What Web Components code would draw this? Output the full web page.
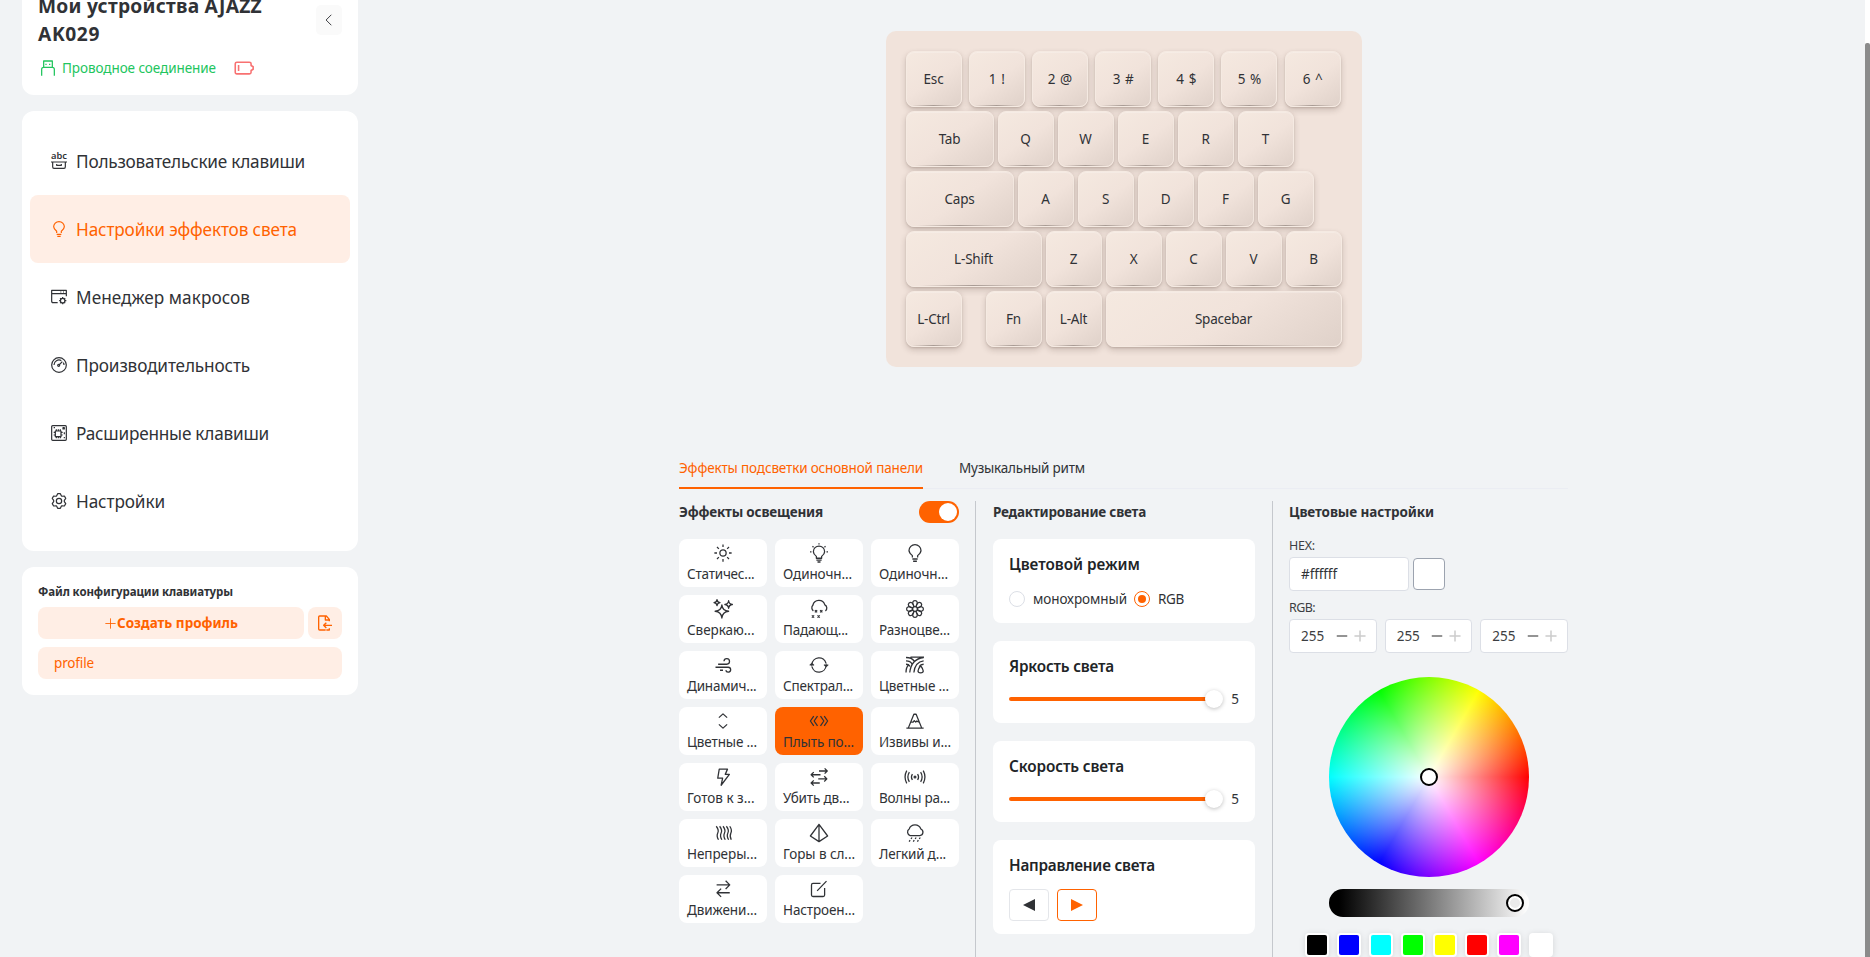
<!DOCTYPE html>
<html lang="ru">
<head>
<meta charset="utf-8">
<title>AJAZZ AK029</title>
<style>
    html, body {
        margin: 0;
        height: 100%;
        overflow: hidden;
    }

    body {
        background: #f1f3f5;
        color: #303236;
        font-family: "Noto Sans", "Open Sans", sans-serif;
        font-size: 13.5px;
    }
</style>
</head>
<body>
<keyboard-app></keyboard-app>

<script>
const ICONS = {
    back: '<path d="M16 3L7 12l9 9"/>',
    usb: '<path d="M5.500 11V1.500h13V11M2.500 23.500V14q0-3 3-3h13q3 0 3 3v9.500M9 5.500v2M14.500 5.500v2"/>',
    battery: '<path d="M3.500 5h15q2 0 2 2v2l2.500 1.500v3L20.500 15v2q0 2-2 2h-15q-2 0-2-2V7q0-2 2-2zM5.500 8.500v7"/>',
    keys: '<text x="0" y="9.500" font-size="12.500" font-weight="600" textLength="24" lengthAdjust="spacingAndGlyphs" fill="currentColor" stroke="none">abc</text><path d="M0 13.500h24M2.500 13.500v7q0 2.500 2 2.500h15q2 0 2-2.500v-7M8.500 16.500v2h7v-2"/>',
    bulb: '<path d="M8.500 18v-2.500C5.500 13 4 11.500 4 8.800a8 8 0 0 1 16 0c0 2.700-1.500 4.200-4.500 6.700V18M8.500 20h7M9.500 23h5"/>',
    macro: '<path d="M10 20.500H3Q1 20.500 1 18.500V2h22v9M1 7h22M14 4.500h1.500M18 4.500h1.500"/><circle cx="17.500" cy="17.500" r="3.300"/><path d="M17.500 12v2M17.500 21v2M12.200 17.500h2M21 17.500h2M13.700 13.700l1.400 1.400M20 20l1.300 1.300M13.700 21.300l1.400-1.400M20 15l1.300-1.300"/>',
    gauge: '<circle cx="12" cy="12" r="11"/><path d="M4.500 12a7.500 7.500 0 0 1 11-6.600M17 7l-5 5M18.500 8.500q1 1.500 1 3.500"/><circle cx="11.500" cy="12.500" r="1.500"/>',
    chip: '<rect x="1" y="1" width="22" height="22" rx="1.500"/><rect x="6.500" y="9" width="8.500" height="8.500"/><path d="M8 6.500V9M11 6.500V9M14 6.500V9M8 17.500V20M11 17.500V20M14 17.500V20M4 11h2.500M4 15h2.500M15 11h2.500M15 15h2.500M4 4h2M18 4h2v2h-2zM20 11v3M20 18v2"/>',
    gear: '<path d="M8.500 4.300L10 1h4l1.500 3.300 1 .6 3.600-.4 2 3.500-2.100 3v2l2.100 3-2 3.500-3.600-.4-1 .6L14 23h-4l-1.500-3.300-1-.6-3.600.4-2-3.500L4 13v-2L1.900 8l2-3.500 3.600.4z"/><circle cx="12" cy="12" r="4"/>',
    plus: '<path d="M12 2.500v19M2.500 12h19"/>',
    minus: '<path d="M3 12h18"/>',
    import: '<path d="M13 22.500H4q-1.500 0-1.500-1.500V3Q2.500 1.500 4 1.500h10l4.500 5v3M12.500 1.500v6h6M22.500 15.500H11M14 11.500l-4 4 4 4M14 22.500h4.500V20"/>',
    sun: '<circle cx="12" cy="12" r="4.200"/><path d="M12 .5V4M12 20v3.500M.5 12H4M20 12h3.500M4 4l2.500 2.500M17.500 17.500L20 20M4 20l2.500-2.500M17.500 6.500L20 4"/>',
    bulbRays: '<path d="M8.500 19v-2.500c-2.500-2-4-3.500-4-6.300a7.500 7.500 0 0 1 15 0c0 2.800-1.500 4.300-4 6.300V19zM8.500 21.500h7M10 24h4M12-1v1.500M0 10.500h2M22 10.500h2M3.300 3l1.400 1.300M20.700 3l-1.400 1.300"/>',
    sparkle: '<path d="M10.500 6.500q.8 8 9 8.500-8.200.8-9 9-.8-8.200-9-9 8.200-.5 9-8.500zM4-.5Q4.500 3 8 3.500 4.500 4 4 7.500 3.500 4 0 3.500 3.500 3 4-.5zM19.500 1q.5 4.500 5 5-4.500.5-5 5-.5-4.500-5-5 4.500-.5 5-5z"/>',
    snow: '<path d="M4.500 14.500A5 5 0 0 1 3.800 7a8.300 8.300 0 0 1 16-.5 4.700 4.700 0 0 1 .7 8M6.500 13.500l3 3M9.500 13.500l-3 3M13.500 13.500l3 3M16.500 13.500l-3 3M2.500 20.500l3 3M5.500 20.500l-3 3M10 20.500l3 3M13 20.500l-3 3"/>',
    flower: '<circle cx="12" cy="12" r="3.200"/><g id="p"><path d="M10.800 9C7.500 4 9 .8 12 .8S16.500 4 13.200 9"/><path d="M10.800 9C7.500 4 9 .8 12 .8S16.500 4 13.200 9" transform="rotate(45 12 12)"/><path d="M10.800 9C7.500 4 9 .8 12 .8S16.500 4 13.200 9" transform="rotate(90 12 12)"/><path d="M10.800 9C7.500 4 9 .8 12 .8S16.500 4 13.200 9" transform="rotate(135 12 12)"/><path d="M10.800 9C7.500 4 9 .8 12 .8S16.500 4 13.200 9" transform="rotate(180 12 12)"/><path d="M10.800 9C7.500 4 9 .8 12 .8S16.500 4 13.200 9" transform="rotate(225 12 12)"/><path d="M10.800 9C7.500 4 9 .8 12 .8S16.500 4 13.200 9" transform="rotate(270 12 12)"/><path d="M10.800 9C7.500 4 9 .8 12 .8S16.500 4 13.200 9" transform="rotate(315 12 12)"/></g>',
    wind: '<path d="M5.500 11H17a3.700 3.700 0 1 0-3.700-4M2 15h17a3.300 3.300 0 1 1-3.300 4M8 19h4"/>',
    cycle: '<path d="M2.500 11a9.600 9.600 0 0 1 18.800-1.500M21.500 13a9.600 9.600 0 0 1-18.800 1.500M2.500 14v-3M21.500 10v3M-.3 12.500l2.800-2.500 2.800 2.500M18.700 11.500l2.800 2.500 2.800-2.500"/>',
    field: '<path d="M0 2q8 0 11 5M6 1.500h18M0 6.500q6 0 8 4M0 11q4 0 5 3M23.500 2Q7 4 5 22M23.500 6.500Q12 8 10.500 22M23.500 11q-4 0-6 3M0 22q0-7 4-11M19.500 13q7 9 0 9.500-7-.5 0-9.500z"/>',
    updown: '<path d="M6.500 7.500L12 2.500l5.500 5M6.500 16.500l5.500 5 5.500-5"/>',
    leftright: '<path d="M5 5.500L.5 12 5 18.500M10 5.500L5.500 12l4.500 6.500M14 5.500l4.500 6.500-4.500 6.500M19 5.500l4.500 6.500-4.500 6.500"/>',
    peak: '<path d="M.5 21.500h23M3 21.500L10.500 3h3L21 21.500M7 13.500h2.500l1.500-2 2 2 1.500-1.500 2.500 1.500"/>',
    bolt: '<path d="M7 1.500h11L15 8.500h5.500L9.500 23l2-9.500H5z"/>',
    arrows: '<path d="M12 4h11M19.500 .5L23 4l-3.500 3.500M14 9H1.500M5 5.500L1.500 9 5 12.500M11 14.500h11.500M19 11l3.500 3.500L19 18M13 20H1.500M5 16.500L1.500 20 5 23.500"/>',
    radio: '<circle cx="12" cy="12" r="1.200"/><path d="M8.500 8q-2.500 4 0 8M15.500 8q2.500 4 0 8M4.500 5.500q-4 6.500 0 13M19.500 5.500q4 6.500 0 13M1 3.500q-4.500 8.500 0 17M23 3.500q4.500 8.500 0 17"/>',
    waves: '<path d="M3 3q4 5 2 9t1 9M7.500 3q4 5 2 9t1 9M12 3q4 5 2 9t1 9M16.500 3q4 5 2 9t1 9M21 3q3.500 5 1.500 9t.5 9"/>',
    pyramid: '<path d="M12 .5L.5 16l11.500 7.500L23.500 16zM12 .5v23"/>',
    rain: '<path d="M5.500 15.500a5 5 0 0 1-1.300-8.800 8.300 8.300 0 0 1 15.600 0 4.600 4.600 0 0 1-1.300 8.800zM8 18l-1.300 2M13.500 18l-1.300 2M19 18l-1.300 2M5.500 21.500l-1.300 2M11 21.500l-1.300 2M16.500 21.500l-1.300 2"/>',
    swap: '<path d="M3.500 6.500h17M15.500 1l5.500 5.500-5.500 5.500M21 17H4M9.500 11.500L4 17l5.500 5.500"/>',
    edit: '<path d="M14 4.500H4Q2 4.500 2 6.500v13.500q0 2 2 2h13.500q2 0 2-2V10.500M9.500 14.500L22 1.500"/>'
};

// Stroke icon: <ui-icon name="gear" size="16" stroke="1.5">
class UiIcon extends HTMLElement {

    constructor() {
        super();
        this.shadow = this.attachShadow({mode: 'open'});
    }

    connectedCallback() {
        const size = this.getAttribute('size') || 18;
        const stroke = this.getAttribute('stroke') || 1.6;
        this.shadow.innerHTML = `<style>
                :host { display: inline-block; flex: none; width: ${size}px; height: ${size}px; }
                svg { display: block; overflow: visible; }
            </style>
            <svg width="${size}" height="${size}" viewBox="0 0 24 24" fill="none" stroke="currentColor"
                stroke-width="${stroke}" stroke-linejoin="round">${ICONS[this.getAttribute('name')]}</svg>`;
    }

}
customElements.define('ui-icon', UiIcon);

// Single line label, tracked so that it takes up exactly `width` pixels
class FitLabel extends HTMLElement {

    constructor() {
        super();
        this.shadow = this.attachShadow({mode: 'open'});
        this.shadow.innerHTML = `<style>
                :host { display: inline-block; white-space: nowrap; }
            </style><slot></slot>`;
    }

    connectedCallback() {
        const target = Number(this.getAttribute('width'));
        const natural = this.getBoundingClientRect().width;
        if (!target || !natural) {
            return;
        }
        this.style.letterSpacing = `${(target - natural) / this.textContent.length}px`;
    }

}
customElements.define('fit-label', FitLabel);

class UiCard extends HTMLElement {

    constructor() {
        super();
        this.shadow = this.attachShadow({mode: 'open'});
        this.shadow.innerHTML = `<style>
                :host { display: block; box-sizing: border-box; background: #fff; border-radius: 12px; }
            </style><slot></slot>`;
    }

}
customElements.define('ui-card', UiCard);

class NavItem extends HTMLElement {

    constructor() {
        super();
        this.shadow = this.attachShadow({mode: 'open'});
    }

    connectedCallback() {
        this.shadow.innerHTML = this.style_() + `
            <ui-icon name="${this.getAttribute('icon')}" size="16" stroke="1.800"></ui-icon>
            <fit-label width="${this.getAttribute('fit')}">${this.getAttribute('label')}</fit-label>`;
    }

    style_() {
        return `<style>
            :host {
                display: flex;
                align-items: center;
                gap: 9px;
                height: 68px;
                padding-left: 21px;
                border-radius: 8px;
                font-size: 17.200px;
            }

            :host([active]) {
                background: #ffeee5;
                color: #ff6200;
            }
        </style>`;
    }

}
customElements.define('nav-item', NavItem);

class DeviceCard extends HTMLElement {

    constructor() {
        super();
        this.shadow = this.attachShadow({mode: 'open'});
        this.shadow.innerHTML = this.style_() + this.html();
    }

    style_() {
        return `<style>
            :host { display: block; }

            ui-card {
                height: 128px;
                padding: 25px 16px 0;
            }

            .top {
                display: flex;
                justify-content: space-between;
                align-items: center;
                height: 56px;
            }

            h1 {
                margin: 0;
                font-size: 19.200px;
                line-height: 28px;
                font-weight: 700;
            }

            .back {
                display: grid;
                place-items: center;
                width: 26px;
                height: 30px;
                border-radius: 5px;
                background: #fafafa;
            }

            .status {
                display: flex;
                align-items: center;
                margin-top: 10px;
                padding-left: 2px;
                height: 20px;
                color: #22c55e;
            }

            .status fit-label { margin-left: 6px; }

            .battery {
                margin-left: 18px;
                color: #f87171;
            }
        </style>`;
    }

    html() {
        return `<ui-card>
            <div class="top">
                <h1><fit-label width="224">Мои устройства AJAZZ</fit-label><br><fit-label width="62">AK029</fit-label></h1>
                <div class="back"><ui-icon name="back" size="14"></ui-icon></div>
            </div>
            <div class="status">
                <ui-icon name="usb" size="16" stroke="1.900"></ui-icon>
                <fit-label width="154">Проводное соединение</fit-label>
                <ui-icon class="battery" name="battery" size="20" stroke="1.900"></ui-icon>
            </div>
        </ui-card>`;
    }

}
customElements.define('device-card', DeviceCard);

class ProfileCard extends HTMLElement {

    constructor() {
        super();
        this.shadow = this.attachShadow({mode: 'open'});
        this.shadow.innerHTML = this.style_() + this.html();
    }

    style_() {
        return `<style>
            :host { display: block; }

            ui-card {
                height: 128px;
                padding: 16px;
            }

            h2 {
                margin: 0 0 6px;
                font-size: 11.500px;
                line-height: 18px;
            }

            .row {
                display: flex;
                gap: 4px;
            }

            .btn {
                display: flex;
                align-items: center;
                justify-content: center;
                box-sizing: border-box;
                height: 32px;
                border-radius: 8px;
                background: #ffeee5;
                color: #ff6200;
            }

            .create {
                flex: 1;
                font-weight: 700;
            }

            .import { width: 34px; }

            .profile {
                justify-content: flex-start;
                margin-top: 8px;
                padding-left: 16px;
            }
        </style>`;
    }

    html() {
        return `<ui-card>
            <h2><fit-label width="195">Файл конфигурации клавиатуры</fit-label></h2>
            <div class="row">
                <div class="btn create"><ui-icon name="plus" size="13"></ui-icon><fit-label width="121">Создать профиль</fit-label></div>
                <div class="btn import"><ui-icon name="import" size="16" stroke="2"></ui-icon></div>
            </div>
            <div class="btn profile"><fit-label width="40">profile</fit-label></div>
        </ui-card>`;
    }

}
customElements.define('profile-card', ProfileCard);

class SideBar extends HTMLElement {

    constructor() {
        super();
        this.shadow = this.attachShadow({mode: 'open'});
        this.shadow.innerHTML = `<style>
                :host {
                    display: flex;
                    flex-direction: column;
                    gap: 16px;
                    flex: none;
                    width: 336px;
                    margin: -33px 24px 0 22px;
                }

                .nav { padding: 16px 8px; }
            </style>
            <device-card></device-card>
            <ui-card class="nav">
                <nav-item icon="keys" fit="229" label="Пользовательские клавиши"></nav-item>
                <nav-item icon="bulb" fit="221" label="Настройки эффектов света" active></nav-item>
                <nav-item icon="macro" fit="174" label="Менеджер макросов"></nav-item>
                <nav-item icon="gauge" fit="174" label="Производительность"></nav-item>
                <nav-item icon="chip" fit="193" label="Расширенные клавиши"></nav-item>
                <nav-item icon="gear" fit="89" label="Настройки"></nav-item>
            </ui-card>
            <profile-card></profile-card>`;
    }

}
customElements.define('side-bar', SideBar);

class KeyCap extends HTMLElement {

    constructor() {
        super();
        this.shadow = this.attachShadow({mode: 'open'});
        this.shadow.innerHTML = `<style>
                :host {
                    display: flex;
                    flex-direction: column;
                    align-items: center;
                    box-sizing: border-box;
                    width: 56px;
                    height: 56px;
                    border-radius: 8px;
                    background: linear-gradient(145deg, #f5e9e0 0%, #f1e3db 50%, #dfd1c9 100%);
                    border: 1px solid #f5eae2;
                    box-shadow: 0 3px 6px rgba(60, 35, 25, .2), 0 1px 2px rgba(60, 35, 25, .14), inset 0 1px 1px rgba(255, 255, 255, .25);
                    font-size: 13.500px;
                    letter-spacing: -.2px;
                    word-spacing: 1.500px;
                    line-height: 54px;
                }

                i {
                    width: 80%;
                    height: 1px;
                    margin-top: -1px;
                    background: linear-gradient(90deg, transparent, #a89b94, transparent);
                }
            </style><slot></slot><i></i>`;
    }

}
customElements.define('key-cap', KeyCap);

class KeyBoard extends HTMLElement {

    constructor() {
        super();
        this.shadow = this.attachShadow({mode: 'open'});
        this.shadow.innerHTML = this.style_() + KeyBoard.rows.map(row => this.row(row)).join('');
    }

    row({gap, keys}) {
        const caps = keys.map(([label, width = 56, before = 0]) =>
            `<key-cap style="width: ${width}px; margin-left: ${before}px">${label}</key-cap>`);
        return `<div class="row" style="gap: ${gap || 4}px">${caps.join('')}</div>`;
    }

    style_() {
        return `<style>
            :host {
                display: flex;
                flex-direction: column;
                gap: 4px;
                box-sizing: border-box;
                width: 476px;
                height: 336px;
                padding: 20px;
                border-radius: 10px;
                background: #f1e3db;
            }

            .row { display: flex; }
        </style>`;
    }

}
KeyBoard.rows = [
    {gap: 7.2, keys: [['Esc'], ['1 !'], ['2 @'], ['3 #'], ['4 $'], ['5 %'], ['6 ^']]},
    {keys: [['Tab', 88], ['Q'], ['W'], ['E'], ['R'], ['T']]},
    {keys: [['Caps', 108], ['A'], ['S'], ['D'], ['F'], ['G']]},
    {keys: [['L-Shift', 136], ['Z'], ['X'], ['C'], ['V'], ['B']]},
    {keys: [['L-Ctrl'], ['Fn', 56, 20], ['L-Alt'], ['Spacebar', 236]]}
];
customElements.define('key-board', KeyBoard);

class TabBar extends HTMLElement {

    constructor() {
        super();
        this.shadow = this.attachShadow({mode: 'open'});
        this.shadow.innerHTML = `<style>
                :host {
                    display: flex;
                    gap: 36px;
                    box-sizing: border-box;
                    height: 40px;
                    line-height: 38px;
                    box-shadow: inset 0 -1px #ebedf3;
                }

                .tab { height: 40px; box-sizing: border-box; }

                .active {
                    color: #ff6200;
                    border-bottom: 2px solid #ff6200;
                }
            </style>
            <div class="tab active"><fit-label width="244">Эффекты подсветки основной панели</fit-label></div>
            <div class="tab"><fit-label width="126">Музыкальный ритм</fit-label></div>`;
    }

}
customElements.define('tab-bar', TabBar);

class EffectTile extends HTMLElement {

    constructor() {
        super();
        this.shadow = this.attachShadow({mode: 'open'});
    }

    connectedCallback() {
        this.shadow.innerHTML = `<style>
                :host {
                    display: flex;
                    flex-direction: column;
                    align-items: center;
                    box-sizing: border-box;
                    height: 48px;
                    padding: 5px 8px 0;
                    border-radius: 8px;
                    background: #fff;
                }

                :host([active]) { background: #ff6200; }

                div {
                    align-self: flex-start;
                    line-height: 22px;
                    margin-top: 1px;
                }
            </style>
            <ui-icon name="${this.getAttribute('icon')}" size="18" stroke="1.700"></ui-icon>
            <div><fit-label width="${this.getAttribute('fit')}">${this.getAttribute('label')}</fit-label></div>`;
    }

}
customElements.define('effect-tile', EffectTile);

class EffectsColumn extends HTMLElement {

    constructor() {
        super();
        this.shadow = this.attachShadow({mode: 'open'});
        this.shadow.innerHTML = this.style_() + this.html();
    }

    style_() {
        return `<style>
            :host { display: block; width: 280px; }

            .head {
                display: flex;
                justify-content: space-between;
                height: 22px;
                line-height: 22px;
                font-weight: 700;
                margin-bottom: 16px;
            }

            .toggle {
                display: flex;
                justify-content: flex-end;
                box-sizing: border-box;
                width: 40px;
                padding: 2px;
                border-radius: 11px;
                background: #ff6200;
            }

            .toggle i {
                width: 18px;
                height: 18px;
                border-radius: 50%;
                background: #fff;
            }

            .grid {
                display: grid;
                grid-template-columns: repeat(3, 88px);
                gap: 8px;
            }
        </style>`;
    }

    html() {
        const tiles = EffectsColumn.effects.map(([icon, label, fit, active]) =>
            `<effect-tile icon="${icon}" label="${label}" fit="${fit}" ${active ? 'active' : ''}></effect-tile>`);
        return `<div class="head"><fit-label width="144">Эффекты освещения</fit-label><span class="toggle"><i></i></span></div>
            <div class="grid">${tiles.join('')}</div>`;
    }

}
EffectsColumn.effects = [
    ['sun', 'Статичес...', 67.5],
    ['bulbRays', 'Одиночн...', 69],
    ['bulb', 'Одиночн...', 69],
    ['sparkle', 'Сверкаю...', 67.5],
    ['snow', 'Падающ...', 65],
    ['flower', 'Разноцве...', 71],
    ['wind', 'Динамич...', 69.5],
    ['cycle', 'Спектрал...', 70],
    ['field', 'Цветные ...', 70],
    ['updown', 'Цветные ...', 70],
    ['leftright', 'Плыть по...', 71, true],
    ['peak', 'Извивы и...', 72],
    ['bolt', 'Готов к з...', 67.5],
    ['arrows', 'Убить дв...', 66.5],
    ['radio', 'Волны ра...', 71],
    ['waves', 'Непреры...', 70],
    ['pyramid', 'Горы в сл...', 72],
    ['rain', 'Легкий д...', 67],
    ['swap', 'Движени...', 70],
    ['edit', 'Настроен...', 72]
];
customElements.define('effects-column', EffectsColumn);

class SettingPanel extends HTMLElement {

    constructor() {
        super();
        this.shadow = this.attachShadow({mode: 'open'});
    }

    connectedCallback() {
        this.shadow.innerHTML = `<style>
                :host {
                    display: block;
                    box-sizing: border-box;
                    border-radius: 8px;
                    padding: 13px 16px 0;
                    background: #fff;
                }

                h3 {
                    margin: 0 0 1px;
                    color: #212427;
                    font-size: 15.300px;
                    font-weight: 600;
                    line-height: 24px;
                }
            </style>
            <h3><fit-label width="${this.getAttribute('fit')}">${this.getAttribute('label')}</fit-label></h3>
            <slot></slot>`;
    }

}
customElements.define('setting-panel', SettingPanel);

class RangeSlider extends HTMLElement {

    constructor() {
        super();
        this.shadow = this.attachShadow({mode: 'open'});
        this.shadow.innerHTML = `<style>
                :host {
                    display: flex;
                    align-items: center;
                    height: 20px;
                }

                .track {
                    display: flex;
                    align-items: center;
                    justify-content: flex-end;
                    width: 214px;
                    height: 4px;
                    border-radius: 2px;
                    margin-right: 9px;
                    background: #ff6200;
                }

                .thumb {
                    flex: none;
                    width: 18px;
                    height: 18px;
                    border-radius: 50%;
                    margin-right: -1px;
                    background: #fff;
                    box-shadow: 0 1px 4px rgba(0, 0, 0, .25);
                }
            </style>
            <div class="track"><div class="thumb"></div></div><slot></slot>`;
    }

}
customElements.define('range-slider', RangeSlider);

class EditColumn extends HTMLElement {

    constructor() {
        super();
        this.shadow = this.attachShadow({mode: 'open'});
        this.shadow.innerHTML = this.style_() + this.html();
    }

    style_() {
        return `<style>
            :host {
                display: flex;
                flex-direction: column;
                gap: 18px;
                box-sizing: border-box;
                width: 298px;
                padding: 0 17px;
                border: 1px solid #c5c8cd;
                border-width: 0 1px;
            }

            h2 {
                margin: 0 0 -2px;
                font-size: 13.500px;
                line-height: 22px;
            }

            .radios {
                display: flex;
                align-items: center;
                margin-top: 15px;
                height: 16px;
            }

            .radio {
                display: grid;
                place-items: center;
                box-sizing: border-box;
                width: 16px;
                height: 16px;
                margin-right: 8px;
                border: 1px solid #dcdfe6;
                border-radius: 50%;
            }

            .radio.on {
                margin-left: 7px;
                border-color: #ff6200;
            }

            .radio.on::after {
                content: "";
                width: 8px;
                height: 8px;
                border-radius: 50%;
                background: #ff6200;
            }

            range-slider { margin-top: 11px; }

            range-slider::part(value) { margin-left: 1px; }

            .dirs {
                display: flex;
                gap: 8px;
                margin-top: 12px;
            }

            .dir {
                display: grid;
                place-items: center;
                box-sizing: border-box;
                width: 40px;
                height: 32px;
                border: 1px solid #e4e6ea;
                border-radius: 4px;
            }

            .dir.on {
                border-color: #ff6200;
                color: #ff6200;
            }

            .dir svg { display: block; }
        </style>`;
    }

    html() {
        return `<h2><fit-label width="153">Редактирование света</fit-label></h2>
            <setting-panel label="Цветовой режим" fit="131" style="height: 84px">
                <div class="radios">
                    <span class="radio"></span><fit-label width="94">монохромный</fit-label>
                    <span class="radio on"></span><fit-label width="26">RGB</fit-label>
                </div>
            </setting-panel>
            <setting-panel label="Яркость света" fit="105" style="height: 82px"><range-slider>5</range-slider></setting-panel>
            <setting-panel label="Скорость света" fit="115" style="height: 81px"><range-slider>5</range-slider></setting-panel>
            <setting-panel label="Направление света" fit="146" style="height: 94px">
                <div class="dirs">
                    <div class="dir"><svg width="12" height="12"><path d="M0 6L12 0v12z" fill="currentColor"/></svg></div>
                    <div class="dir on"><svg width="12" height="12"><path d="M12 6L0 0v12z" fill="currentColor"/></svg></div>
                </div>
            </setting-panel>`;
    }

}
customElements.define('edit-column', EditColumn);

class NumberBox extends HTMLElement {

    constructor() {
        super();
        this.shadow = this.attachShadow({mode: 'open'});
        this.shadow.innerHTML = `<style>
                :host {
                    display: flex;
                    flex: 1;
                    align-items: center;
                    box-sizing: border-box;
                    height: 34px;
                    padding: 0 9px 0 11px;
                    border: 1px solid #dcdfe6;
                    border-radius: 4px;
                    background: #fff;
                    color: #3c3e42;
                }

                .minus { margin: 0 4px 0 auto; color: #858585; }
                .plus { color: #ccc; }
            </style>
            <fit-label width="23"><slot></slot></fit-label>
            <ui-icon class="minus" name="minus" size="14" stroke="3"></ui-icon>
            <ui-icon class="plus" name="plus" size="14" stroke="2.600"></ui-icon>`;
    }

}
customElements.define('number-box', NumberBox);

class ColorWheel extends HTMLElement {

    constructor() {
        super();
        this.shadow = this.attachShadow({mode: 'open'});
        this.shadow.innerHTML = `<style>
                :host { display: block; width: 200px; }

                .wheel {
                    display: grid;
                    place-items: center;
                    height: 200px;
                    border-radius: 50%;
                    background:
                        radial-gradient(circle closest-side, #fff, transparent),
                        conic-gradient(from 90deg, #f00, #f0f, #00f, #0ff, #0f0, #ff0, #f00);
                }

                .value {
                    display: flex;
                    align-items: center;
                    justify-content: flex-end;
                    box-sizing: border-box;
                    height: 28px;
                    margin-top: 12px;
                    padding-right: 5px;
                    border-radius: 14px;
                    background: linear-gradient(90deg, #000 5%, #fff);
                }

                .dot {
                    box-sizing: border-box;
                    width: 18px;
                    height: 18px;
                    border: 2px solid #000;
                    border-radius: 50%;
                    background: #fff;
                }

                .value .dot {
                    background: #ebebeb;
                    box-shadow: inset 0 0 0 2px #fff;
                }
            </style>
            <div class="wheel"><div class="dot"></div></div>
            <div class="value"><div class="dot"></div></div>`;
    }

}
customElements.define('color-wheel', ColorWheel);

class ColorColumn extends HTMLElement {

    constructor() {
        super();
        this.shadow = this.attachShadow({mode: 'open'});
        this.shadow.innerHTML = this.style_() + this.html();
    }

    style_() {
        return `<style>
            :host { display: block; width: 279px; }

            h2 {
                margin: 0 0 13px;
                font-size: 13.500px;
                line-height: 22px;
            }

            .label {
                height: 21px;
                line-height: 20px;
                font-size: 12.500px;
                color: #3c3e42;
            }

            .hex {
                display: flex;
                align-items: center;
                gap: 4px;
                margin-bottom: 7px;
            }

            .input {
                display: flex;
                align-items: center;
                box-sizing: border-box;
                width: 120px;
                height: 34px;
                padding-left: 11px;
                border: 1px solid #dcdfe6;
                border-radius: 4px;
                background: #fff;
            }

            .swatch {
                box-sizing: border-box;
                width: 32px;
                height: 32px;
                border: 1px solid #9ca3af;
                border-radius: 4px;
                background: #fff;
            }

            .rgb {
                display: flex;
                gap: 8px;
            }

            color-wheel { margin: 24px 0 16px 40px; }

            .presets {
                display: flex;
                gap: 8px;
                padding-left: 16px;
            }

            .presets i {
                box-sizing: border-box;
                width: 24px;
                height: 24px;
                border: 2px solid #fff;
                border-radius: 4px;
                box-shadow: 0 1px 6px rgba(0, 0, 0, .12);
            }
        </style>`;
    }

    html() {
        const presets = ['#000', '#00f', '#0ff', '#0f0', '#ff0', '#f00', '#f0f', '#fff'];
        return `<h2><fit-label width="145">Цветовые настройки</fit-label></h2>
            <div class="label"><fit-label width="26">HEX:</fit-label></div>
            <div class="hex"><div class="input"><fit-label width="36">#ffffff</fit-label></div><div class="swatch"></div></div>
            <div class="label"><fit-label width="26">RGB:</fit-label></div>
            <div class="rgb"><number-box>255</number-box><number-box>255</number-box><number-box>255</number-box></div>
            <color-wheel></color-wheel>
            <div class="presets">${presets.map(color => `<i style="background: ${color}"></i>`).join('')}</div>`;
    }

}
customElements.define('color-column', ColorColumn);

class ScrollBar extends HTMLElement {

    constructor() {
        super();
        this.shadow = this.attachShadow({mode: 'open'});
        this.shadow.innerHTML = `<style>
                :host {
                    display: block;
                    box-sizing: border-box;
                    width: 5px;
                    padding-top: 43px;
                    background: #fff;
                }

                div {
                    height: 100%;
                    border-radius: 2px 2px 0 0;
                    background: #8b8b8b;
                }
            </style><div></div>`;
    }

}
customElements.define('scroll-bar', ScrollBar);

class KeyboardApp extends HTMLElement {

    constructor() {
        super();
        this.shadow = this.attachShadow({mode: 'open'});
    }

    connectedCallback() {
        this.shadow.innerHTML = this.style_() + this.html();
    }

    style_() {
        return `<style>
            :host {
                display: flex;
                height: 957px;
                overflow: hidden;
            }

            main {
                flex: 1;
                display: flex;
                flex-direction: column;
                align-items: center;
                padding-top: 31px;
            }

            section {
                width: 889px;
                margin-top: 82px;
            }

            .columns {
                display: flex;
                gap: 16px;
                height: 480px;
                margin-top: 12px;
            }
        </style>`;
    }

    html() {
        return `<side-bar></side-bar>
            <main>
                <key-board></key-board>
                <section>
                    <tab-bar></tab-bar>
                    <div class="columns">
                        <effects-column></effects-column>
                        <edit-column></edit-column>
                        <color-column></color-column>
                    </div>
                </section>
            </main>
            <scroll-bar></scroll-bar>`;
    }

}
customElements.define('keyboard-app', KeyboardApp);
</script>
</body>
</html>
